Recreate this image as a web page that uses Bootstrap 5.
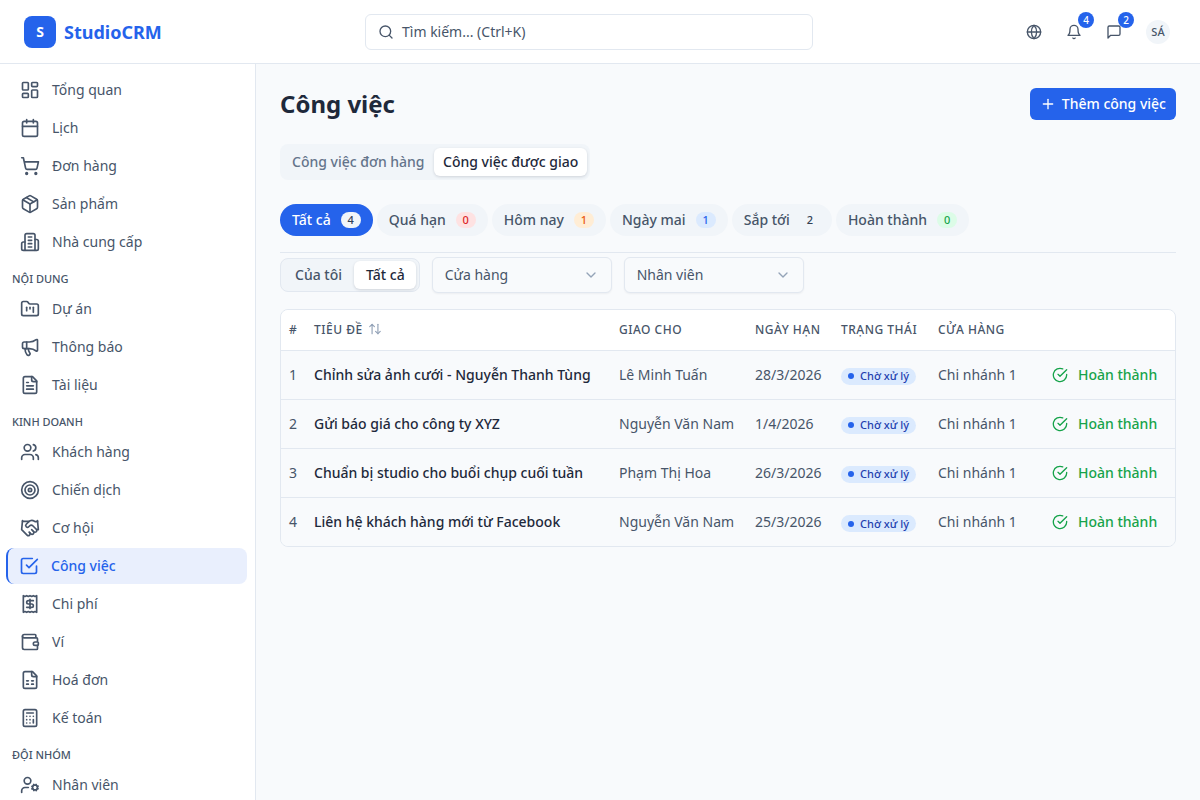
<!doctype html>
<html lang="vi">
<head>
<meta charset="utf-8">
<title>StudioCRM</title>
<link href="https://cdn.jsdelivr.net/npm/bootstrap@5.3.0/dist/css/bootstrap.min.css" rel="stylesheet">
<style>
html,body{height:100%;overflow:hidden}
body{font-family:"Noto Sans",Inter,sans-serif;font-size:14px;line-height:20px;background:#f8fafc;color:#1e293b}
.ic{width:20px;height:20px;fill:none;stroke:currentColor;stroke-width:2;stroke-linecap:round;stroke-linejoin:round;flex:none}
.ic-16{width:16px;height:16px}.ic-14{width:14px;height:14px}
.topbar{height:64px;background:#fff;border-bottom:1px solid #e2e8f0;padding:0 24px}
.logo-box{width:32px;height:32px;border-radius:8px;background:#2563eb;color:#fff;font-size:14px;font-weight:660}
.logo-text{font-size:18px;font-weight:660;color:#2563eb}
.search-wrap{width:448px;height:36px;border:1px solid #e2e8f0;border-radius:6px;background:#fff;color:#475569;padding:0 12px;position:absolute;left:365px;top:14px}
.top-btn{width:40px;height:32px;color:#475569;background:none;border:0;padding:0;position:relative}
.top-count{position:absolute;top:-4px;left:24px;width:16px;height:16px;border-radius:50%;background:#2563eb;color:#fff;font-size:10px;line-height:16px;text-align:center;font-weight:480}
.avatar{width:24px;height:24px;border-radius:50%;background:#f1f5f9;color:#475569;font-size:11px;font-weight:480;margin-left:12px;margin-right:6px}
.shell{height:736px}
.side{width:256px;flex:none;background:#fff;border-right:1px solid #e2e8f0;padding:8px 8px 0 6px;overflow:hidden}
.side-item{height:36px;margin-bottom:2px;padding-left:14px;gap:12px;color:#475569;text-decoration:none;border-radius:8px}
.side-item.on{background:#e9effd;color:#2563eb;border-left:2px solid #2563eb;padding-left:11px;font-weight:480}
.side-head{font-size:11px;line-height:16px;color:#475569;text-transform:uppercase;font-weight:480;padding:9px 0 4px 6px}
.main-pane{padding:24px 24px 0}
.page-title{font-size:24px;font-weight:660;line-height:32px;color:#1e293b;margin:0}
.add-btn{height:32px;padding:0 10px;background:#2563eb;border:0;border-radius:6px;font-size:14px;line-height:20px;font-weight:480;gap:6px;color:#fff;white-space:nowrap}
.seg{background:#f1f5f9;border-radius:8px;padding:4px 3px 4px 4px;display:inline-flex;gap:2px}
.seg-btn{height:28px;padding:0 7.5px 0 8px;font-size:14px;font-weight:480;color:#64748b;border:0;background:none;border-radius:6px;white-space:nowrap}
.seg-btn.on{background:#fff;color:#1e293b;padding:0 9px;box-shadow:0 1px 3px rgba(15,23,42,.15)}
.seg-b{border:1px solid #e2e8f0;padding:2px 3px}
.seg-b .seg-btn{padding:0 10px 0 11px;color:#475569}
.seg-b .seg-btn.on{color:#1e293b;padding:0 11px 0 12px}
.pills{gap:4.1px;padding-bottom:16px;border-bottom:1px solid #e2e8f0;margin-top:24px}
.pill-btn{height:32px;border-radius:16px;background:#f1f5f9;color:#475569;border:0;padding:0 12px;font-size:14px;font-weight:480;gap:10px;white-space:nowrap}
.pill-btn.on{background:#2563eb;color:#fff}
.cnt{min-width:20px;height:16px;border-radius:8px;font-size:11px;line-height:16px;text-align:center;font-weight:480;padding:0 4px}
.cnt-w{background:#f1f5f9;color:#334155}
.cnt-r{background:#fee2e2;color:#dc2626}
.cnt-o{background:#ffedd5;color:#ea580c}
.cnt-b{background:#dbeafe;color:#2563eb}
.cnt-g{background:#f1f5f9;color:#334155}
.cnt-gr{background:#dcfce7;color:#16a34a}
.filters{gap:12px;margin-top:4px;margin-bottom:16px}
.pick{width:180px;height:36px;border:1px solid #e2e8f0;border-radius:6px;padding:0 12px;background:#f8fafc;color:#475569;box-shadow:0 1px 2px rgba(15,23,42,.05)}
.pick .ic{color:#94a3b8}
.task-wrap{border:1px solid #e2e8f0;border-radius:8px;overflow:hidden;background:#f8fafc}
.task-table{table-layout:fixed;width:100%;margin:0;font-size:14px;--bs-table-bg:transparent}
.task-table th{background:#fff;height:40px;padding:0 8px;font-size:12px;font-weight:480;text-transform:uppercase;letter-spacing:.5px;color:#475569;border-bottom:1px solid #e2e8f0;vertical-align:middle;white-space:nowrap}
.task-table td{height:49px;padding:0 8px;color:#475569;border-bottom:1px solid #e2e8f0;vertical-align:middle;white-space:nowrap;background:#f8fafc}
.task-table tr:last-child td{border-bottom:0}
.task-table td.task-name{font-weight:480;color:#1e293b}
.w1{width:25px}.w2{width:305px}.w3{width:136px}.w4{width:86px}.w5{width:97px}.w6{width:114px}
.state{height:17px;padding:0 7px;background:#dbeafe;color:#1e40af;font-size:11px;font-weight:480;border-radius:9px;gap:6px}
.state i{width:6px;height:6px;border-radius:50%;background:#2563eb;display:block}
.done{color:#16a34a;font-weight:480;gap:10px}
.sort{color:#94a3b8;margin-left:2px;vertical-align:-2px}
</style>
</head>
<body>
<svg class="d-none" xmlns="http://www.w3.org/2000/svg">
<symbol id="i-dash" viewBox="0 0 24 24"><rect x="3" y="3" width="7" height="9" rx="1"/><rect x="14" y="3" width="7" height="5" rx="1"/><rect x="14" y="12" width="7" height="9" rx="1"/><rect x="3" y="16" width="7" height="5" rx="1"/></symbol>
<symbol id="i-cal" viewBox="0 0 24 24"><path d="M8 2v4"/><path d="M16 2v4"/><rect x="3" y="4" width="18" height="18" rx="2"/><path d="M3 10h18"/></symbol>
<symbol id="i-cart" viewBox="0 0 24 24"><circle cx="8" cy="21" r="1"/><circle cx="19" cy="21" r="1"/><path d="M2.05 2.05h2l2.66 12.42a2 2 0 0 0 2 1.58h9.78a2 2 0 0 0 1.95-1.57l1.65-7.43H5.12"/></symbol>
<symbol id="i-pkg" viewBox="0 0 24 24"><path d="M11 21.73a2 2 0 0 0 2 0l7-4A2 2 0 0 0 21 16V8a2 2 0 0 0-1-1.73l-7-4a2 2 0 0 0-2 0l-7 4A2 2 0 0 0 3 8v8a2 2 0 0 0 1 1.73z"/><path d="M12 22V12"/><path d="m3.3 7 8.7 5 8.7-5"/><path d="m7.5 4.27 9 5.15"/></symbol>
<symbol id="i-bld" viewBox="0 0 24 24"><path d="M6 22V4a2 2 0 0 1 2-2h8a2 2 0 0 1 2 2v18Z"/><path d="M6 12H4a2 2 0 0 0-2 2v6a2 2 0 0 0 2 2h2"/><path d="M18 9h2a2 2 0 0 1 2 2v9a2 2 0 0 1-2 2h-2"/><path d="M10 6h4"/><path d="M10 10h4"/><path d="M10 14h4"/><path d="M10 18h4"/></symbol>
<symbol id="i-fold" viewBox="0 0 24 24"><path d="M4 20h16a2 2 0 0 0 2-2V8a2 2 0 0 0-2-2h-7.93a2 2 0 0 1-1.66-.9l-.82-1.2A2 2 0 0 0 7.93 3H4a2 2 0 0 0-2 2v13c0 1.1.9 2 2 2Z"/><path d="M8 10v4"/><path d="M12 10v2"/><path d="M16 10v6"/></symbol>
<symbol id="i-mega" viewBox="0 0 24 24"><path d="M11 6a13 13 0 0 0 8.4-2.8A1 1 0 0 1 21 4v12a1 1 0 0 1-1.6.8A13 13 0 0 0 11 14H5a2 2 0 0 1-2-2V8a2 2 0 0 1 2-2z"/><path d="M6 14a12 12 0 0 0 2.4 7.2 2 2 0 0 0 3.2-2.4A8 8 0 0 1 10 14"/><path d="M8 6v8"/></symbol>
<symbol id="i-doc" viewBox="0 0 24 24"><path d="M15 2H6a2 2 0 0 0-2 2v16a2 2 0 0 0 2 2h12a2 2 0 0 0 2-2V7Z"/><path d="M14 2v4a2 2 0 0 0 2 2h4"/><path d="M10 9H8"/><path d="M16 13H8"/><path d="M16 17H8"/></symbol>
<symbol id="i-users" viewBox="0 0 24 24"><path d="M16 21v-2a4 4 0 0 0-4-4H6a4 4 0 0 0-4 4v2"/><circle cx="9" cy="7" r="4"/><path d="M22 21v-2a4 4 0 0 0-3-3.87"/><path d="M16 3.13a4 4 0 0 1 0 7.75"/></symbol>
<symbol id="i-target" viewBox="0 0 24 24"><circle cx="12" cy="12" r="10"/><circle cx="12" cy="12" r="6"/><circle cx="12" cy="12" r="2"/></symbol>
<symbol id="i-hand" viewBox="0 0 24 24"><path d="m11 17 2 2a1 1 0 1 0 3-3"/><path d="m14 14 2.5 2.5a1 1 0 1 0 3-3l-3.88-3.88a3 3 0 0 0-4.24 0l-.88.88a1 1 0 1 1-3-3l2.81-2.81a5.79 5.79 0 0 1 7.06-.87l.47.28a2 2 0 0 0 1.42.25L21 4"/><path d="m21 3 1 11h-2"/><path d="M3 3 2 14l6.5 6.5a1 1 0 1 0 3-3"/><path d="M3 4h8"/></symbol>
<symbol id="i-check" viewBox="0 0 24 24"><path d="m9 11 3 3L22 4"/><path d="M21 12v7a2 2 0 0 1-2 2H5a2 2 0 0 1-2-2V5a2 2 0 0 1 2-2h11"/></symbol>
<symbol id="i-rcpt" viewBox="0 0 24 24"><path d="M4 2v20l2-1 2 1 2-1 2 1 2-1 2 1 2-1 2 1V2l-2 1-2-1-2 1-2-1-2 1-2-1-2 1Z"/><path d="M16 8h-6a2 2 0 1 0 0 4h4a2 2 0 1 1 0 4H8"/><path d="M12 17.5v-11"/></symbol>
<symbol id="i-wallet" viewBox="0 0 24 24"><path d="M19 7V4a1 1 0 0 0-1-1H5a2 2 0 0 0 0 4h15a1 1 0 0 1 1 1v4h-3a2 2 0 0 0 0 4h3a1 1 0 0 0 1-1v-2a1 1 0 0 0-1-1"/><path d="M3 5v14a2 2 0 0 0 2 2h15a1 1 0 0 0 1-1v-4"/></symbol>
<symbol id="i-sheet" viewBox="0 0 24 24"><path d="M15 2H6a2 2 0 0 0-2 2v16a2 2 0 0 0 2 2h12a2 2 0 0 0 2-2V7Z"/><path d="M14 2v4a2 2 0 0 0 2 2h4"/><path d="M8 13h2"/><path d="M14 13h2"/><path d="M8 17h2"/><path d="M14 17h2"/></symbol>
<symbol id="i-calc" viewBox="0 0 24 24"><rect x="4" y="2" width="16" height="20" rx="2"/><line x1="8" x2="16" y1="6" y2="6"/><line x1="16" x2="16" y1="14" y2="18"/><path d="M16 10h.01"/><path d="M12 10h.01"/><path d="M8 10h.01"/><path d="M12 14h.01"/><path d="M8 14h.01"/><path d="M12 18h.01"/><path d="M8 18h.01"/></symbol>
<symbol id="i-ucog" viewBox="0 0 24 24"><circle cx="18" cy="15" r="3"/><circle cx="9" cy="7" r="4"/><path d="M10 15H6a4 4 0 0 0-4 4v2"/><path d="m21.7 16.4-.9-.3"/><path d="m15.2 13.9-.9-.3"/><path d="m16.6 18.7.3-.9"/><path d="m19.1 12.2.3-.9"/><path d="m19.6 18.7-.4-1"/><path d="m16.8 12.3-.4-1"/><path d="m14.3 16.6 1-.4"/><path d="m20.7 13.8 1-.4"/></symbol>
<symbol id="i-globe" viewBox="0 0 24 24"><circle cx="12" cy="12" r="10"/><path d="M12 2a14.5 14.5 0 0 0 0 20 14.5 14.5 0 0 0 0-20"/><path d="M2 12h20"/></symbol>
<symbol id="i-bell" viewBox="0 0 24 24"><path d="M6 8a6 6 0 0 1 12 0c0 7 3 9 3 9H3s3-2 3-9"/><path d="M10.3 21a1.94 1.94 0 0 0 3.4 0"/></symbol>
<symbol id="i-msg" viewBox="0 0 24 24"><path d="M21 15a2 2 0 0 1-2 2H7l-4 4V5a2 2 0 0 1 2-2h14a2 2 0 0 1 2 2z"/></symbol>
<symbol id="i-search" viewBox="0 0 24 24"><circle cx="11" cy="11" r="8"/><path d="m21 21-4.3-4.3"/></symbol>
<symbol id="i-plus" viewBox="0 0 24 24"><path d="M5 12h14"/><path d="M12 5v14"/></symbol>
<symbol id="i-chev" viewBox="0 0 24 24"><path d="m6 9 6 6 6-6"/></symbol>
<symbol id="i-sort" viewBox="0 0 24 24"><path d="m21 16-4 4-4-4"/><path d="M17 20V4"/><path d="m3 8 4-4 4 4"/><path d="M7 4v16"/></symbol>
<symbol id="i-ok" viewBox="0 0 24 24"><path d="M22 11.08V12a10 10 0 1 1-5.93-9.14"/><path d="m9 11 3 3L22 4"/></symbol>
</svg>

<header class="topbar d-flex align-items-center justify-content-between position-relative">
  <div class="d-flex align-items-center gap-2">
    <div class="logo-box d-flex align-items-center justify-content-center">S</div>
    <span class="logo-text">StudioCRM</span>
  </div>
  <div class="search-wrap d-flex align-items-center gap-2">
    <svg class="ic ic-16"><use href="#i-search"/></svg><span>Tìm kiếm... (Ctrl+K)</span>
  </div>
  <div class="d-flex align-items-center">
    <button class="top-btn d-flex align-items-center justify-content-center"><svg class="ic ic-16"><use href="#i-globe"/></svg></button>
    <button class="top-btn d-flex align-items-center justify-content-center"><svg class="ic ic-16"><use href="#i-bell"/></svg><span class="top-count">4</span></button>
    <button class="top-btn d-flex align-items-center justify-content-center"><svg class="ic ic-16"><use href="#i-msg"/></svg><span class="top-count">2</span></button>
    <div class="avatar d-flex align-items-center justify-content-center">SÁ</div>
  </div>
</header>

<div class="shell d-flex">
  <nav class="side">
    <a class="side-item d-flex align-items-center" href="#"><svg class="ic"><use href="#i-dash"/></svg>Tổng quan</a>
    <a class="side-item d-flex align-items-center" href="#"><svg class="ic"><use href="#i-cal"/></svg>Lịch</a>
    <a class="side-item d-flex align-items-center" href="#"><svg class="ic"><use href="#i-cart"/></svg>Đơn hàng</a>
    <a class="side-item d-flex align-items-center" href="#"><svg class="ic"><use href="#i-pkg"/></svg>Sản phẩm</a>
    <a class="side-item d-flex align-items-center" href="#"><svg class="ic"><use href="#i-bld"/></svg>Nhà cung cấp</a>
    <div class="side-head">Nội dung</div>
    <a class="side-item d-flex align-items-center" href="#"><svg class="ic"><use href="#i-fold"/></svg>Dự án</a>
    <a class="side-item d-flex align-items-center" href="#"><svg class="ic"><use href="#i-mega"/></svg>Thông báo</a>
    <a class="side-item d-flex align-items-center" href="#"><svg class="ic"><use href="#i-doc"/></svg>Tài liệu</a>
    <div class="side-head">Kinh doanh</div>
    <a class="side-item d-flex align-items-center" href="#"><svg class="ic"><use href="#i-users"/></svg>Khách hàng</a>
    <a class="side-item d-flex align-items-center" href="#"><svg class="ic"><use href="#i-target"/></svg>Chiến dịch</a>
    <a class="side-item d-flex align-items-center" href="#"><svg class="ic"><use href="#i-hand"/></svg>Cơ hội</a>
    <a class="side-item on d-flex align-items-center" href="#"><svg class="ic"><use href="#i-check"/></svg>Công việc</a>
    <a class="side-item d-flex align-items-center" href="#"><svg class="ic"><use href="#i-rcpt"/></svg>Chi phí</a>
    <a class="side-item d-flex align-items-center" href="#"><svg class="ic"><use href="#i-wallet"/></svg>Ví</a>
    <a class="side-item d-flex align-items-center" href="#"><svg class="ic"><use href="#i-sheet"/></svg>Hoá đơn</a>
    <a class="side-item d-flex align-items-center" href="#"><svg class="ic"><use href="#i-calc"/></svg>Kế toán</a>
    <div class="side-head">Đội nhóm</div>
    <a class="side-item d-flex align-items-center" href="#"><svg class="ic"><use href="#i-ucog"/></svg>Nhân viên</a>
  </nav>

  <main class="main-pane flex-grow-1">
    <div class="d-flex align-items-center justify-content-between">
      <h1 class="page-title">Công việc</h1>
      <button class="add-btn btn d-flex align-items-center"><svg class="ic ic-16"><use href="#i-plus"/></svg>Thêm công việc</button>
    </div>
    <div class="mt-4 d-flex">
      <div class="seg">
        <button class="seg-btn">Công việc đơn hàng</button>
        <button class="seg-btn on">Công việc được giao</button>
      </div>
    </div>
    <div class="pills d-flex">
      <button class="pill-btn on d-flex align-items-center">Tất cả<span class="cnt cnt-w">4</span></button>
      <button class="pill-btn d-flex align-items-center">Quá hạn<span class="cnt cnt-r">0</span></button>
      <button class="pill-btn d-flex align-items-center">Hôm nay<span class="cnt cnt-o">1</span></button>
      <button class="pill-btn d-flex align-items-center">Ngày mai<span class="cnt cnt-b">1</span></button>
      <button class="pill-btn d-flex align-items-center">Sắp tới<span class="cnt cnt-g">2</span></button>
      <button class="pill-btn d-flex align-items-center">Hoàn thành<span class="cnt cnt-gr">0</span></button>
    </div>
    <div class="filters d-flex align-items-center">
      <div class="seg seg-b">
        <button class="seg-btn">Của tôi</button>
        <button class="seg-btn on">Tất cả</button>
      </div>
      <div class="pick d-flex align-items-center justify-content-between">Cửa hàng<svg class="ic ic-16"><use href="#i-chev"/></svg></div>
      <div class="pick d-flex align-items-center justify-content-between">Nhân viên<svg class="ic ic-16"><use href="#i-chev"/></svg></div>
    </div>
    <div class="task-wrap">
      <table class="table task-table">
        <thead>
          <tr>
            <th class="w1">#</th>
            <th class="w2">Tiêu đề <svg class="ic ic-14 sort"><use href="#i-sort"/></svg></th>
            <th class="w3">Giao cho</th>
            <th class="w4">Ngày hạn</th>
            <th class="w5">Trạng thái</th>
            <th class="w6">Cửa hàng</th>
            <th></th>
          </tr>
        </thead>
        <tbody>
          <tr><td>1</td><td class="task-name">Chỉnh sửa ảnh cưới - Nguyễn Thanh Tùng</td><td>Lê Minh Tuấn</td><td>28/3/2026</td><td><span class="state d-inline-flex align-items-center"><i></i>Chờ xử lý</span></td><td>Chi nhánh 1</td><td><span class="done d-flex align-items-center"><svg class="ic ic-16"><use href="#i-ok"/></svg>Hoàn thành</span></td></tr>
          <tr><td>2</td><td class="task-name">Gửi báo giá cho công ty XYZ</td><td>Nguyễn Văn Nam</td><td>1/4/2026</td><td><span class="state d-inline-flex align-items-center"><i></i>Chờ xử lý</span></td><td>Chi nhánh 1</td><td><span class="done d-flex align-items-center"><svg class="ic ic-16"><use href="#i-ok"/></svg>Hoàn thành</span></td></tr>
          <tr><td>3</td><td class="task-name">Chuẩn bị studio cho buổi chụp cuối tuần</td><td>Phạm Thị Hoa</td><td>26/3/2026</td><td><span class="state d-inline-flex align-items-center"><i></i>Chờ xử lý</span></td><td>Chi nhánh 1</td><td><span class="done d-flex align-items-center"><svg class="ic ic-16"><use href="#i-ok"/></svg>Hoàn thành</span></td></tr>
          <tr><td>4</td><td class="task-name">Liên hệ khách hàng mới từ Facebook</td><td>Nguyễn Văn Nam</td><td>25/3/2026</td><td><span class="state d-inline-flex align-items-center"><i></i>Chờ xử lý</span></td><td>Chi nhánh 1</td><td><span class="done d-flex align-items-center"><svg class="ic ic-16"><use href="#i-ok"/></svg>Hoàn thành</span></td></tr>
        </tbody>
      </table>
    </div>
  </main>
</div>
<script src="https://cdn.jsdelivr.net/npm/bootstrap@5.3.0/dist/js/bootstrap.bundle.min.js"></script>
</body>
</html>
